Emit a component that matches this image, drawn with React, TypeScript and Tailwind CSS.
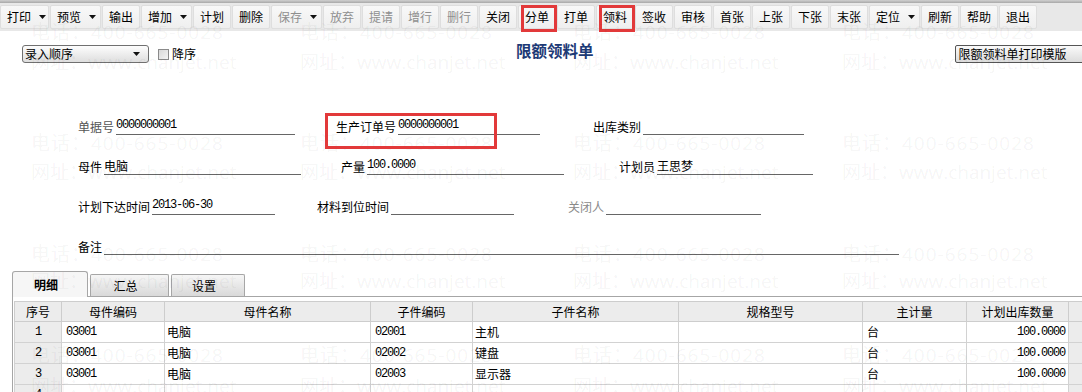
import clsx from "clsx";

type Tool = { label: string; arrow?: boolean; disabled?: boolean; marked?: boolean };

const tools: Tool[] = [
  { label: "打印", arrow: true },
  { label: "预览", arrow: true },
  { label: "输出" },
  { label: "增加", arrow: true },
  { label: "计划" },
  { label: "删除" },
  { label: "保存", arrow: true, disabled: true },
  { label: "放弃", disabled: true },
  { label: "提请", disabled: true },
  { label: "增行", disabled: true },
  { label: "删行", disabled: true },
  { label: "关闭" },
  { label: "分单", marked: true },
  { label: "打单" },
  { label: "领料", marked: true },
  { label: "签收" },
  { label: "审核" },
  { label: "首张" },
  { label: "上张" },
  { label: "下张" },
  { label: "末张" },
  { label: "定位", arrow: true },
  { label: "刷新" },
  { label: "帮助" },
  { label: "退出" },
];

const rows = [
  { no: "1", code: "03001", name: "电脑", sub: "02001", subName: "主机", unit: "台", qty: "100.0000" },
  { no: "2", code: "03001", name: "电脑", sub: "02002", subName: "键盘", unit: "台", qty: "100.0000" },
  { no: "3", code: "03001", name: "电脑", sub: "02003", subName: "显示器", unit: "台", qty: "100.0000" },
  { no: "4", code: "", name: "", sub: "", subName: "", unit: "", qty: "" },
];

// watermark tiles, positions read off the screenshot
const markLeft = ["left-[31px]", "left-[300px]", "left-[573px]", "left-[842px]"];
const phoneTop = ["top-[22px]", "top-[133px]", "top-[244px]", "top-[345px]"];
const urlTop = ["top-[52px]", "top-[162px]", "top-[271px]", "top-[376px]"];

const digits = "font-['Liberation_Mono',monospace] text-[12px] tracking-[-1.2px]";

function Caret({ className }: { className?: string }) {
  return (
    <svg width="7" height="4" viewBox="0 0 7 4" className={clsx("shrink-0", className)}>
      <path d="M0 0h7L3.5 4z" fill="#111" />
    </svg>
  );
}

function ToolButton({ tool, first }: { tool: Tool; first: boolean }) {
  return (
    <div
      className={clsx(
        "relative mr-px flex h-[24px] shrink-0 items-center rounded-[2px] border border-[#dedede] bg-linear-to-b from-[#f8f8f8] to-[#efefef] pl-[6px]",
        first ? "w-[49px]" : tool.arrow ? "w-[51px]" : "w-[38px]"
      )}
    >
      <span className={clsx("whitespace-nowrap", tool.disabled ? "text-[#8f8f8f]" : "text-black")}>{tool.label}</span>
      {tool.arrow && <Caret className="ml-[8px]" />}
      {tool.marked && (
        <span className="absolute -top-px -bottom-[4px] left-[2px] -right-[2px] border-[3px] border-[#e2393a]" />
      )}
    </div>
  );
}

function Field({
  label,
  value,
  className,
  labelClass,
  mono,
}: {
  label: string;
  value?: string;
  className: string;
  labelClass?: string;
  mono?: boolean;
}) {
  return (
    <div className={clsx("flex shrink-0 items-end", className)}>
      <span className={clsx("whitespace-nowrap leading-[16px]", labelClass)}>{label}</span>
      <span className={clsx("ml-[2px] h-[17px] flex-1 whitespace-nowrap border-b border-[#666] leading-[15px]", mono && digits)}>
        {value}
      </span>
    </div>
  );
}

export default function App() {
  return (
    <div className="relative h-[392px] w-[1082px] overflow-hidden bg-white font-['Noto_Sans_CJK_SC','Noto_Sans',sans-serif] text-[12px] text-black">
      {/* toolbar */}
      <div className="h-[3px] bg-linear-to-b from-[#d0d0d0] to-[#a8a8a8]" />
      <div className="flex h-[28px] items-start bg-[#e8e8e8] pt-[2px]">
        {tools.map((t, i) => (
          <ToolButton key={t.label} tool={t} first={i === 0} />
        ))}
      </div>

      {/* sort + title + print template */}
      <div className="mt-[14px] flex h-[18px] items-start whitespace-nowrap pl-[22px]">
        <div className="flex h-[18px] w-[127px] shrink-0 items-center rounded-[3px] border border-[#707070] bg-linear-to-b from-[#fdfdfd] to-[#dedede] pl-[2px] pr-[8px]">
          <span className="flex-1 leading-[16px]">录入顺序</span>
          <Caret />
        </div>
        <div className="ml-[9px] mt-[4px] h-[11px] w-[11px] shrink-0 border border-[#8a8a8a] bg-linear-to-br from-[#d8d8d8] to-[#f4f4f4]" />
        <span className="ml-[3px] shrink-0 leading-[18px]">降序</span>
        <span className="ml-[320px] mt-[-5px] shrink-0 text-[15.5px] font-bold leading-[20px] text-[#1d3a76]">
          限额领料单
        </span>
        <div className="ml-[361px] flex h-[18px] w-[140px] shrink-0 items-center rounded-[2px] border border-[#555] bg-linear-to-b from-[#fafafa] to-[#dcdcdc] pl-[3px]">
          限额领料单打印模版
        </div>
      </div>

      {/* header form */}
      <div className="mt-[32px] flex flex-col pl-[78px]">
        <div className="flex h-[40px] items-end">
          <Field label="单据号" value="0000000001" mono labelClass="text-[#555]" className="w-[217px]" />
          <Field label="生产订单号" value="0000000001" mono className="ml-[41px] w-[204px]" />
          <Field label="出库类别" className="ml-[53px] w-[211px]" />
        </div>
        <div className="flex h-[40px] items-end">
          <Field label="母件" value="电脑" className="w-[223px]" />
          <Field label="产量" value="100.0000" mono className="ml-[40px] w-[223px]" />
          <Field label="计划员" value="王思梦" className="ml-[55px] w-[194px]" />
        </div>
        <div className="flex h-[40px] items-end">
          <Field label="计划下达时间" value="2013-06-30" mono className="w-[197px]" />
          <Field label="材料到位时间" className="ml-[42px] w-[197px]" />
          <Field label="关闭人" labelClass="text-[#8a8a8a]" className="ml-[54px] w-[193px]" />
        </div>
        <div className="flex h-[40px] items-end">
          <Field label="备注" className="w-[821px]" />
        </div>
      </div>

      {/* tabs */}
      <div className="ml-[12px] mt-[16px] flex h-[26px] items-end border-b border-[#a6a6a6]">
        <div className="-mb-px flex h-[26px] w-[76px] items-center justify-center rounded-t-[3px] border border-b-0 border-[#a6a6a6] bg-[#f6f6f6] pr-[8px] font-bold">
          明细
        </div>
        <div className="ml-[2px] flex h-[22px] w-[79px] items-center justify-center rounded-t-[2px] border border-b-0 border-[#a6a6a6] bg-linear-to-b from-[#f6f6f6] to-[#d9d9d9] pr-[8px]">
          汇总
        </div>
        <div className="ml-[2px] flex h-[22px] w-[74px] items-center justify-center rounded-t-[2px] border border-b-0 border-[#a6a6a6] bg-linear-to-b from-[#f6f6f6] to-[#d9d9d9] pr-[8px]">
          设置
        </div>
      </div>

      {/* detail grid */}
      <div className="ml-[12px] border-l border-[#a6a6a6] pl-px pt-[4px]">
        <table className="w-[1069px] table-fixed border-collapse">
          <colgroup>
            <col className="w-[47px]" />
            <col className="w-[103px]" />
            <col className="w-[206px]" />
            <col className="w-[102px]" />
            <col className="w-[206px]" />
            <col className="w-[184px]" />
            <col className="w-[104px]" />
            <col className="w-[102px]" />
            <col />
          </colgroup>
          <thead>
            <tr className="h-[20px] bg-[#ececec]">
              {["序号", "母件编码", "母件名称", "子件编码", "子件名称", "规格型号", "主计量", "计划出库数量", ""].map(
                (h, i) => (
                  <th key={i} className="border border-[#cdcdcd] p-0 text-center font-normal leading-[18px]">
                    {h}
                  </th>
                )
              )}
            </tr>
          </thead>
          <tbody>
            {rows.map((r) => (
              <tr key={r.no} className="h-[21px]">
                <td className={clsx("border border-[#d2d2d2] bg-[#ececec] p-0 text-center", digits)}>{r.no}</td>
                <td className={clsx("border border-[#d2d2d2] pl-[4px]", digits)}>{r.code}</td>
                <td className="border border-[#d2d2d2] pl-[2px]">{r.name}</td>
                <td className={clsx("border border-[#d2d2d2] pl-[4px]", digits)}>{r.sub}</td>
                <td className="border border-[#d2d2d2] pl-[2px]">{r.subName}</td>
                <td className="border border-[#d2d2d2]" />
                <td className="border border-[#d2d2d2] pl-[4px]">{r.unit}</td>
                <td className={clsx("border border-[#d2d2d2] pr-[3px] text-right", digits)}>{r.qty}</td>
                <td className="border border-[#d2d2d2] bg-[#ececec]" />
              </tr>
            ))}
          </tbody>
        </table>
      </div>

      {/* screenshot watermark */}
      <div className="pointer-events-none absolute inset-0 font-['Open_Sans','Noto_Sans_CJK_SC',sans-serif] text-[19px] leading-[20px] text-black/[0.055]">
        {phoneTop.map((top) =>
          markLeft.map((left) => (
            <span key={top + left} className={clsx("absolute whitespace-nowrap tracking-[1px]", top, left)}>
              电话：400-665-0028
            </span>
          ))
        )}
        {urlTop.map((top) =>
          markLeft.map((left) => (
            <span key={top + left} className={clsx("absolute whitespace-nowrap", top, left)}>
              网址：www.chanjet.net
            </span>
          ))
        )}
      </div>

      {/* red highlight around 生产订单号 */}
      <div className="pointer-events-none absolute left-[325px] top-[113px] h-[36px] w-[172px] border-[3px] border-[#e2393a]" />
    </div>
  );
}
